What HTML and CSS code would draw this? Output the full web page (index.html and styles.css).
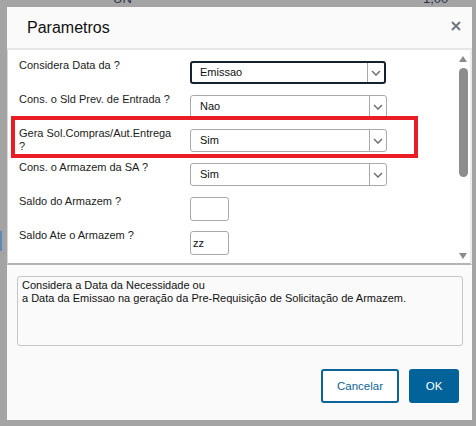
FILE: index.html
```html
<!DOCTYPE html>
<html>
<head>
<meta charset="utf-8">
<link rel="stylesheet" href="styles.css">
</head>
<body>
<div class="backdrop">
  <span class="bg-text bg-un">UN</span>
  <span class="bg-text bg-qty">1,00</span>
  <span class="bg-blue"></span>
</div>
<div class="dialog">
  <div class="dlg-header">
    <h1 class="title">Parametros</h1>
    <button class="close" aria-label="Fechar">
      <svg width="10" height="10" viewBox="0 0 10 10"><path d="M1 1 L9 9 M9 1 L1 9" stroke="#6e7681" stroke-width="2" fill="none"/></svg>
    </button>
  </div>
  <div class="panel">
    <div class="form">
      <div class="row">
        <div class="label">Considera Data da ?</div>
        <div class="select focused"><span class="val">Emissao</span><span class="arrow"><svg width="10" height="6" viewBox="0 0 10 6"><path d="M1 1 L5 5 L9 1" stroke="#707070" stroke-width="1.5" fill="none"/></svg></span></div>
      </div>
      <div class="row">
        <div class="label">Cons. o Sld Prev. de Entrada ?</div>
        <div class="select"><span class="val">Nao</span><span class="arrow"><svg width="10" height="6" viewBox="0 0 10 6"><path d="M1 1 L5 5 L9 1" stroke="#707070" stroke-width="1.5" fill="none"/></svg></span></div>
      </div>
      <div class="row">
        <div class="label">Gera Sol.Compras/Aut.Entrega ?</div>
        <div class="select"><span class="val">Sim</span><span class="arrow"><svg width="10" height="6" viewBox="0 0 10 6"><path d="M1 1 L5 5 L9 1" stroke="#707070" stroke-width="1.5" fill="none"/></svg></span></div>
      </div>
      <div class="row">
        <div class="label">Cons. o Armazem da SA ?</div>
        <div class="select"><span class="val">Sim</span><span class="arrow"><svg width="10" height="6" viewBox="0 0 10 6"><path d="M1 1 L5 5 L9 1" stroke="#707070" stroke-width="1.5" fill="none"/></svg></span></div>
      </div>
      <div class="row">
        <div class="label">Saldo do Armazem ?</div>
        <div class="input"></div>
      </div>
      <div class="row">
        <div class="label">Saldo Ate o Armazem ?</div>
        <div class="input">zz</div>
      </div>
    </div>
    <div class="scrollbar">
      <span class="arr-up"></span>
      <span class="thumb"></span>
      <span class="arr-down"></span>
    </div>
  </div>
  <div class="desc">Considera a Data da Necessidade ou<br>a Data da Emissao na geração da Pre-Requisição de Solicitação de Armazem.</div>
  <div class="actions">
    <button class="btn btn-cancel">Cancelar</button>
    <button class="btn btn-ok">OK</button>
  </div>
  <div class="highlight"></div>
</div>
</body>
</html>
```

FILE: styles.css
```css
html, body {
  margin: 0;
  padding: 0;
}
body {
  width: 476px;
  height: 426px;
  background: #a4a4a4;
  position: relative;
  overflow: hidden;
  font-family: "Liberation Sans", Arial, sans-serif;
  padding: 7px 4px 6px 7px;
  box-sizing: border-box;
}
.backdrop {
  position: absolute;
  inset: 0;
}
.bg-text {
  position: absolute;
  top: -8px;
  font-size: 13px;
  line-height: 13px;
  color: #2b3350;
}
.bg-un { left: 113px; }
.bg-qty { left: 423px; }
.bg-blue {
  position: absolute;
  left: 0;
  top: 231px;
  width: 2px;
  height: 20px;
  background: #5b88b8;
}
.dialog {
  position: relative;
  width: 465px;
  height: 413px;
  background: #fafafa;
  display: flex;
  flex-direction: column;
}
.dlg-header {
  height: 41px;
  display: flex;
  align-items: center;
  justify-content: space-between;
  border-bottom: 2px solid #e6e6e6;
  padding: 0 11px 0 20px;
}
.title {
  margin: 0;
  font-size: 16px;
  font-weight: normal;
  color: #111;
  line-height: 41px;
}
.close {
  border: 0;
  background: none;
  padding: 0;
  width: 10px;
  height: 10px;
  align-self: flex-start;
  margin-top: 14px;
  display: block;
}
.close svg { display: block; }
.panel {
  height: 213px;
  background: #fff;
  border-left: 1px solid #d8d8d8;
  border-right: 2px solid #ececec;
  border-bottom: 2px solid #b4b4b4;
  display: flex;
}
.form {
  flex: 1;
  padding: 11px 0 0 11px;
}
.row {
  display: flex;
  align-items: flex-start;
  height: 34px;
}
.label {
  width: 160px;
  margin-right: 11px;
  margin-top: -2px;
  font-size: 11px;
  line-height: 13px;
  color: #1c1c1c;
}
.select {
  box-sizing: border-box;
  width: 197px;
  height: 23px;
  border: 1px solid #a9a9a9;
  border-radius: 3px;
  background: #fff;
  display: flex;
  font-size: 11px;
  color: #111;
}
.select.focused {
  width: 196px;
  border: 2px solid #15222e;
}
.select .val {
  flex: 1;
  padding-left: 9px;
  line-height: 21px;
}
.select.focused .val {
  padding-left: 8px;
  line-height: 19px;
}
.select .arrow {
  width: 16px;
  border-left: 1px solid #a9a9a9;
  display: flex;
  align-items: center;
  justify-content: center;
}
.input {
  box-sizing: border-box;
  width: 39px;
  height: 24px;
  border: 1px solid #a9a9a9;
  border-radius: 3px;
  background: #fff;
  font-size: 11px;
  line-height: 22px;
  padding-left: 2px;
  color: #111;
}
.scrollbar {
  width: 14px;
  display: flex;
  flex-direction: column;
  align-items: center;
  padding: 6px 0 4px;
  box-sizing: border-box;
}
.arr-up {
  width: 0;
  height: 0;
  border-left: 4.5px solid transparent;
  border-right: 4.5px solid transparent;
  border-bottom: 6px solid #8a8a8a;
}
.thumb {
  width: 9px;
  height: 109px;
  margin-top: 6px;
  margin-bottom: auto;
  border-radius: 5px;
  background: #8d8d8d;
}
.arr-down {
  width: 0;
  height: 0;
  border-left: 4.5px solid transparent;
  border-right: 4.5px solid transparent;
  border-top: 6px solid #8a8a8a;
}
.desc {
  box-sizing: border-box;
  height: 70px;
  margin: 11px 9px 0 10px;
  border: 1px solid #c6c6c6;
  border-radius: 3px;
  padding: 2px 4px;
  font-size: 11px;
  line-height: 13px;
  color: #111;
}
.actions {
  display: flex;
  justify-content: flex-end;
  gap: 10px;
  margin: 23px 13px 0 0;
}
.btn {
  box-sizing: border-box;
  height: 34px;
  border-radius: 3px;
  font-family: "Liberation Sans", Arial, sans-serif;
  font-size: 11.5px;
  padding: 0;
}
.btn-cancel {
  width: 78px;
  background: #fff;
  border: 2px solid #0d6499;
  color: #0d6499;
}
.btn-ok {
  width: 50px;
  background: #02639a;
  border: 0;
  color: #fff;
}
.highlight {
  position: absolute;
  left: 4px;
  top: 109px;
  width: 407px;
  height: 42px;
  box-sizing: border-box;
  border: 4px solid #ea1c24;
}
```
